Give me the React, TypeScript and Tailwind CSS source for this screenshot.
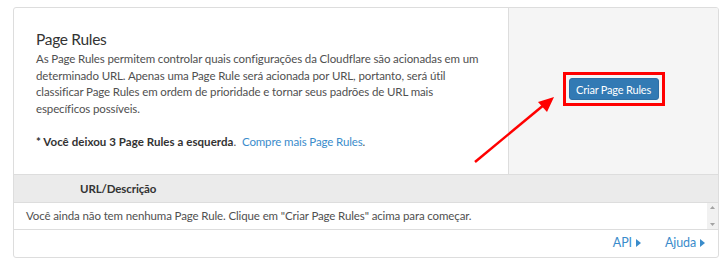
const Caret = () => (
  <svg width="5" height="8" viewBox="0 0 5 8" className="inline-block ml-[4px] mb-[1px]">
    <path d="M0 0 L5 4 L0 8 Z" fill="currentColor" />
  </svg>
);

const App = () => {
  return (
    <div className="relative w-[728px] h-[267px] bg-white pt-[7px] pl-[13px] font-['Lato','Open_Sans',sans-serif] text-[11.5px] tracking-[-0.12px] text-[#505050]">
      <div className="w-[706px] h-[251px] border border-[#dddddd] rounded-[3px] flex flex-col overflow-hidden">
        <div className="flex h-[166px]">
          <div className="w-[494px] shrink-0 pl-[22px] pt-[20px] whitespace-nowrap">
            <h3 className="text-[15.5px] tracking-[-0.3px] leading-[22px] text-[#333] mb-[1px]">Page Rules</h3>
            <p className="leading-[16.5px]">
              As Page Rules permitem controlar quais configurações da Cloudflare são acionadas em um
              <br />
              determinado URL. Apenas uma Page Rule será acionada por URL, portanto, será útil
              <br />
              classificar Page Rules em ordem de prioridade e tornar seus padrões de URL mais
              <br />
              específicos possíveis.
            </p>
            <p className="leading-[16.5px] mt-[16.5px]">
              <span className="font-bold text-[#333] tracking-[0.05px]">* Você deixou 3 Page Rules a esquerda</span>.{" "}
              <a className="text-[#3a8ccb] ml-[3px]">Compre mais Page Rules</a>.
            </p>
          </div>
          <div className="flex-1 bg-[#f5f5f5] border-l border-[#dddddd] flex items-center justify-center">
            <div className="border-[3px] border-[#ff0000] p-[3px] -mt-[4px]">
              <button className="w-[90px] h-[22px] bg-[#327ab4] border border-[#2e6da4] rounded-[3px] text-white text-[11px] tracking-[-0.2px] leading-none">
                Criar Page Rules
              </button>
            </div>
          </div>
        </div>
        <div className="h-[28px] bg-[#ebebeb] border-t border-[#dddddd] flex items-center pl-[66px] font-bold text-[#333]">
          URL/Descrição
        </div>
        <div className="h-[28px] border-t border-b border-[#dddddd] flex">
          <div className="flex-1 flex items-center pl-[12px]">
            Você ainda não tem nenhuma Page Rule. Clique em "Criar Page Rules" acima para começar.
          </div>
          <div className="w-[11px] bg-[#f1f1f1] flex flex-col justify-between items-center py-[3px] text-[#a3a3a3]">
            <svg width="5" height="3" viewBox="0 0 5 3"><path d="M0 3 L2.5 0 L5 3 Z" fill="currentColor" /></svg>
            <svg width="5" height="3" viewBox="0 0 5 3"><path d="M0 0 L2.5 3 L5 0 Z" fill="currentColor" /></svg>
          </div>
        </div>
        <div className="flex-1 flex items-center justify-end pr-[13px] gap-[24px] text-[#3a8ccb] text-[12.5px]">
          <a className="flex items-center">API<Caret /></a>
          <a className="flex items-center">Ajuda<Caret /></a>
        </div>
      </div>
      <svg className="absolute left-0 top-0 pointer-events-none" width="728" height="267">
        <line x1="475" y1="162" x2="545" y2="104" stroke="#ff0000" strokeWidth="2.5" />
        <path d="M554 97 L538 102 L547 112 Z" fill="#ff0000" />
      </svg>
    </div>
  );
};

export default App;
